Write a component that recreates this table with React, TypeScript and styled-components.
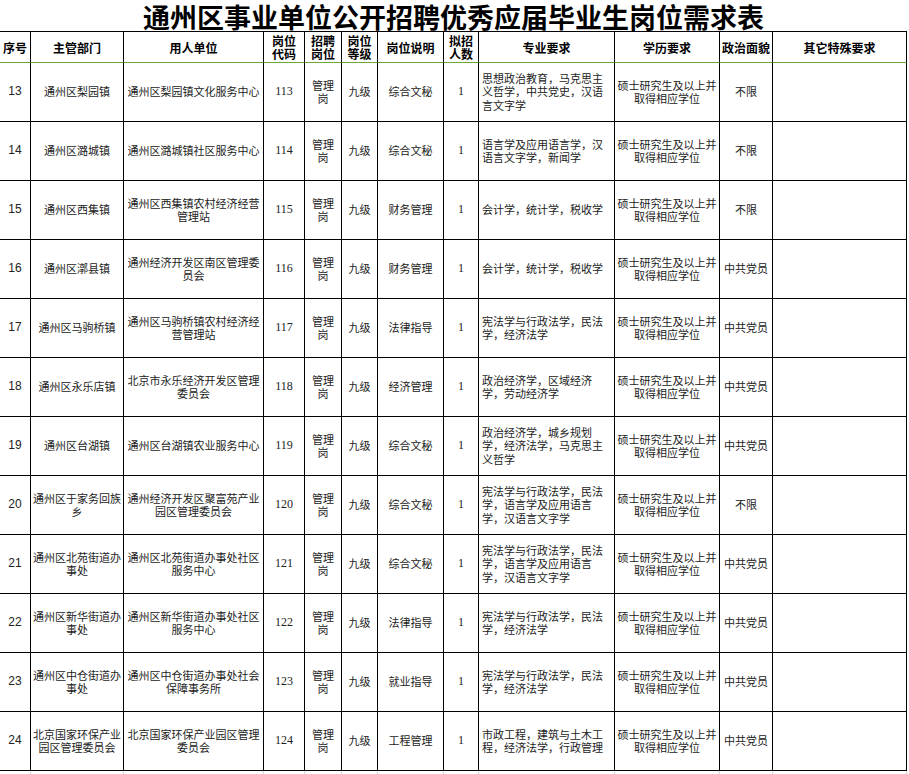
import React from "react";
import styled, { createGlobalStyle } from "styled-components";

const GlobalStyle = createGlobalStyle`
  html, body { margin: 0; padding: 0; background: #fff; }
  body { font-family: "Noto Sans CJK SC", "Liberation Sans", sans-serif; color: #1a1a1a; }
  * { box-sizing: border-box; }
`;

const COLS = "31px 93px 140px 41px 37px 36px 66px 35px 136px 105px 53px 134px";

const Page = styled.div`
  width: 909px;
  height: 774px;
  overflow: hidden;
`;

const Title = styled.h1`
  margin: 0;
  width: 907px;
  height: 31px;
  display: flex;
  align-items: center;
  justify-content: center;
  font-size: 27px;
  line-height: 28px;
  font-weight: 700;
  color: #000;
  padding-top: 2px;
`;

const Grid = styled.div`
  display: grid;
  grid-template-columns: ${COLS};
  width: 907px;
  border-top: 1px solid #000;
`;

const HeadCell = styled.div`
  height: 31px;
  border-right: 1px solid #000;
  border-bottom: 1px solid #6aa83a;
  display: flex;
  align-items: center;
  justify-content: center;
  text-align: center;
  font-size: 12px;
  line-height: 13px;
  font-weight: 700;
  color: #000;
  white-space: pre-line;
`;

type CellProps = { $left?: boolean; $font?: "sans" | "serif" | "cjk" };

const Cell = styled.div<CellProps>`
  height: 59px;
  border-right: 1px solid #000;
  border-bottom: 1px solid #000;
  display: flex;
  align-items: center;
  justify-content: ${(p) => (p.$left ? "flex-start" : "center")};
  text-align: ${(p) => (p.$left ? "left" : "center")};
  padding: ${(p) => (p.$left ? "0 2px 0 3px" : "0")};
  font-family: ${(p) =>
    p.$font === "serif"
      ? '"Liberation Serif", serif'
      : p.$font === "sans"
      ? '"Liberation Sans", sans-serif'
      : '"Noto Sans CJK SC", sans-serif'};
  font-size: ${(p) => (p.$font === "cjk" || !p.$font ? "11px" : "12px")};
  line-height: 13.5px;
  color: #222;
  white-space: pre-line;
`;

const Filler = styled.div`
  height: 6px;
  border-right: 1px solid #d6d6d6;
`;

const headers = [
  "序号",
  "主管部门",
  "用人单位",
  "岗位\n代码",
  "招聘\n岗位",
  "岗位\n等级",
  "岗位说明",
  "拟招\n人数",
  "专业要求",
  "学历要求",
  "政治面貌",
  "其它特殊要求",
];

type Row = {
  no: number;
  dept: string;
  unit: string;
  desc: string;
  major: string;
  pol: string;
};

const rows: Row[] = [
  { no: 13, dept: "通州区梨园镇", unit: "通州区梨园镇文化服务中心", desc: "综合文秘", major: "思想政治教育，马克思主\n义哲学，中共党史，汉语\n言文字学", pol: "不限" },
  { no: 14, dept: "通州区潞城镇", unit: "通州区潞城镇社区服务中心", desc: "综合文秘", major: "语言学及应用语言学，汉\n语言文字学，新闻学", pol: "不限" },
  { no: 15, dept: "通州区西集镇", unit: "通州区西集镇农村经济经营\n管理站", desc: "财务管理", major: "会计学，统计学，税收学", pol: "不限" },
  { no: 16, dept: "通州区漷县镇", unit: "通州经济开发区南区管理委\n员会", desc: "财务管理", major: "会计学，统计学，税收学", pol: "中共党员" },
  { no: 17, dept: "通州区马驹桥镇", unit: "通州区马驹桥镇农村经济经\n营管理站", desc: "法律指导", major: "宪法学与行政法学，民法\n学，经济法学", pol: "中共党员" },
  { no: 18, dept: "通州区永乐店镇", unit: "北京市永乐经济开发区管理\n委员会", desc: "经济管理", major: "政治经济学，区域经济\n学，劳动经济学", pol: "中共党员" },
  { no: 19, dept: "通州区台湖镇", unit: "通州区台湖镇农业服务中心", desc: "综合文秘", major: "政治经济学，城乡规划\n学，经济法学，马克思主\n义哲学", pol: "中共党员" },
  { no: 20, dept: "通州区于家务回族\n乡", unit: "通州经济开发区聚富苑产业\n园区管理委员会", desc: "综合文秘", major: "宪法学与行政法学，民法\n学，语言学及应用语言\n学，汉语言文字学", pol: "不限" },
  { no: 21, dept: "通州区北苑街道办\n事处", unit: "通州区北苑街道办事处社区\n服务中心", desc: "综合文秘", major: "宪法学与行政法学，民法\n学，语言学及应用语言\n学，汉语言文字学", pol: "中共党员" },
  { no: 22, dept: "通州区新华街道办\n事处", unit: "通州区新华街道办事处社区\n服务中心", desc: "法律指导", major: "宪法学与行政法学，民法\n学，经济法学", pol: "中共党员" },
  { no: 23, dept: "通州区中仓街道办\n事处", unit: "通州区中仓街道办事处社会\n保障事务所", desc: "就业指导", major: "宪法学与行政法学，民法\n学，经济法学", pol: "中共党员" },
  { no: 24, dept: "北京国家环保产业\n园区管理委员会", unit: "北京国家环保产业园区管理\n委员会", desc: "工程管理", major: "市政工程，建筑与土木工\n程，经济法学，行政管理", pol: "中共党员" },
];

export default function App() {
  return (
    <Page>
      <GlobalStyle />
      <Title>通州区事业单位公开招聘优秀应届毕业生岗位需求表</Title>
      <Grid>
        {headers.map((h) => (
          <HeadCell key={h}>{h}</HeadCell>
        ))}
        {rows.map((r) => (
          <React.Fragment key={r.no}>
            <Cell $font="sans">{r.no}</Cell>
            <Cell>{r.dept}</Cell>
            <Cell>{r.unit}</Cell>
            <Cell $font="serif">{100 + r.no}</Cell>
            <Cell>{"管理\n岗"}</Cell>
            <Cell>九级</Cell>
            <Cell>{r.desc}</Cell>
            <Cell $font="serif">1</Cell>
            <Cell $left>{r.major}</Cell>
            <Cell>{"硕士研究生及以上并\n取得相应学位"}</Cell>
            <Cell>{r.pol}</Cell>
            <Cell />
          </React.Fragment>
        ))}
        {headers.map((h) => (
          <Filler key={"f" + h} />
        ))}
      </Grid>
    </Page>
  );
}
